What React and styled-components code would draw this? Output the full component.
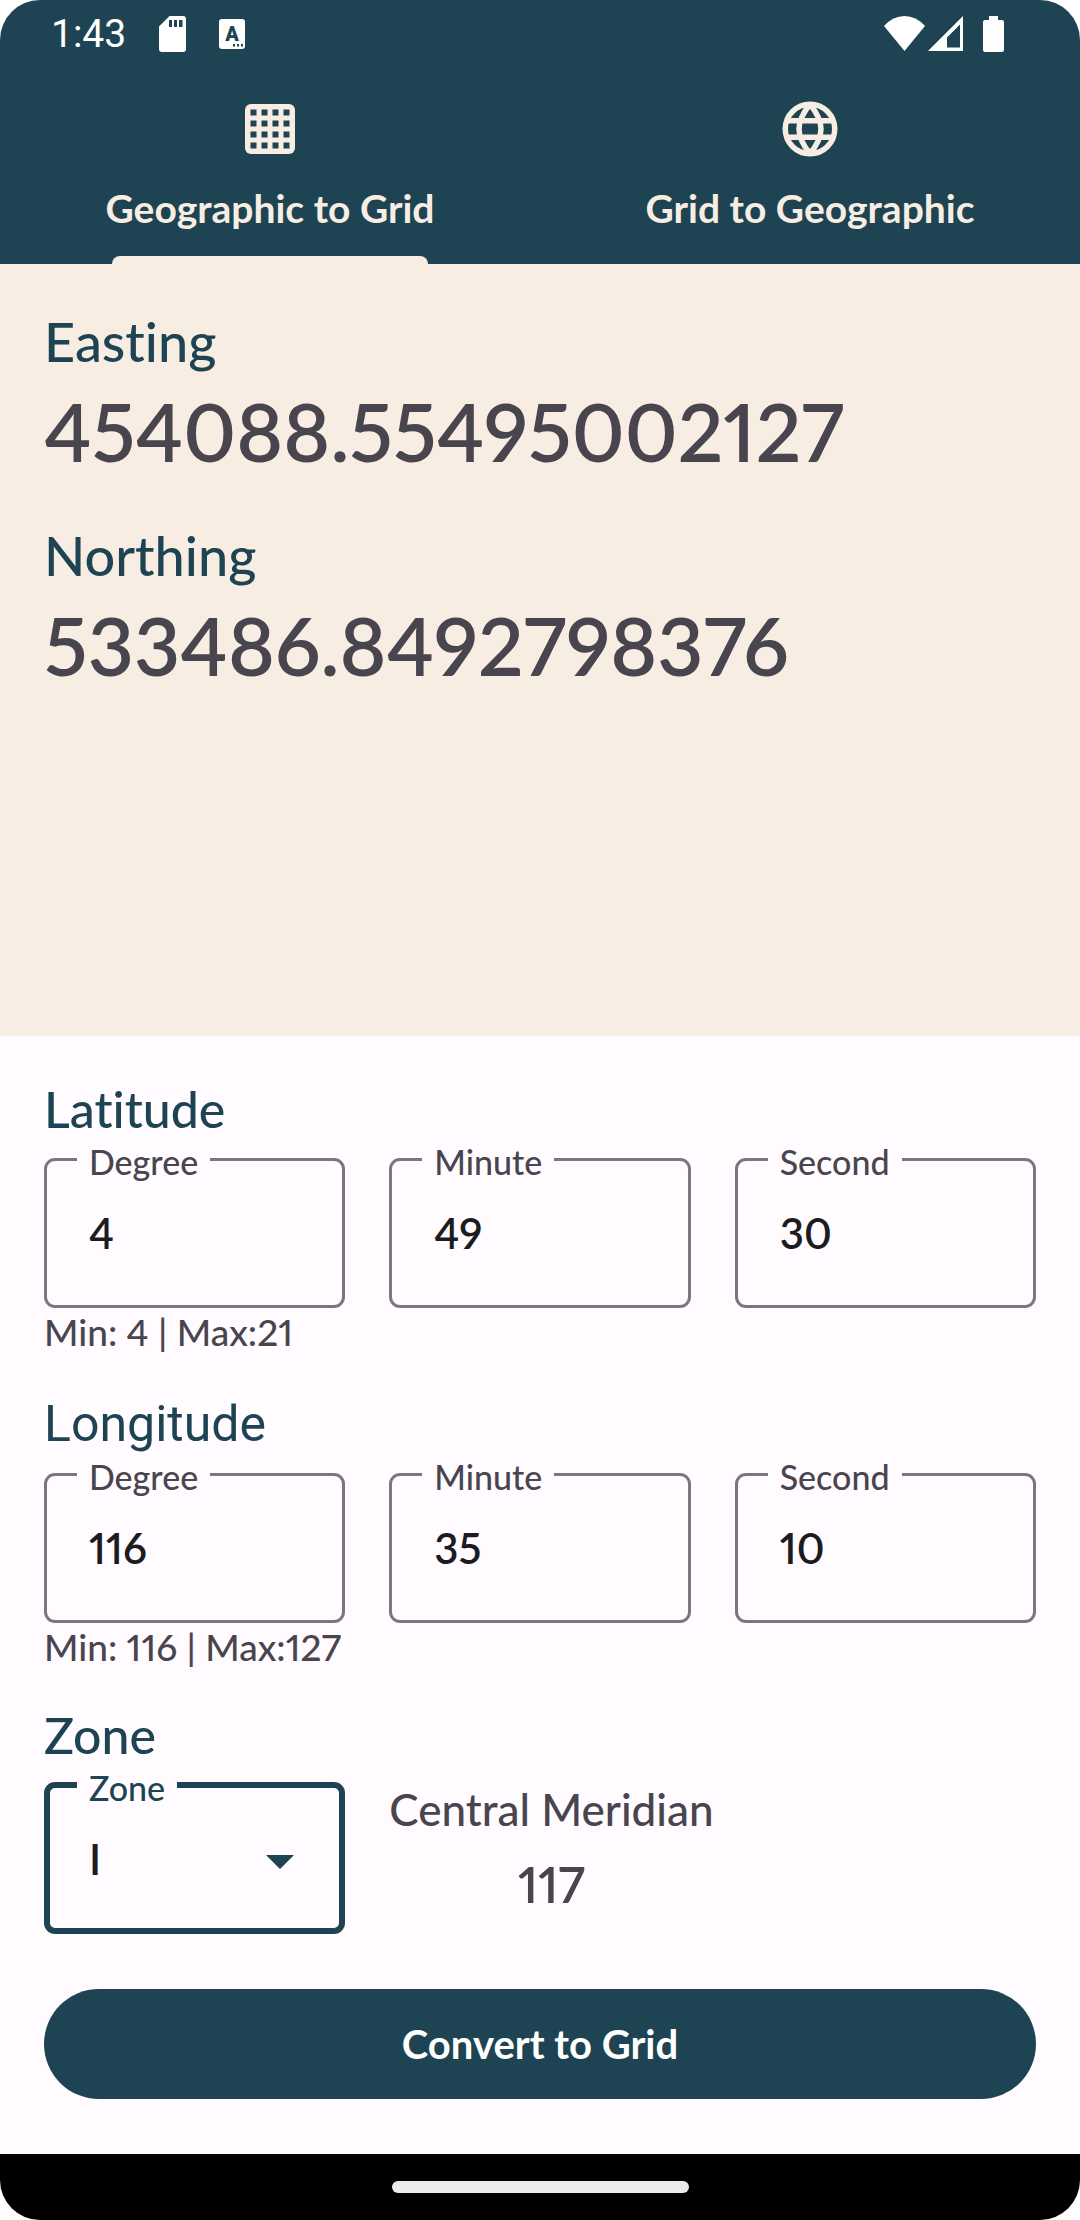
import React, { useState } from "react";
import styled, { createGlobalStyle } from "styled-components";

const teal = "#1e4453";
const cream = "#f7ede2";
const paper = "#fffbff";
const slate = "#49454f";
const outline = "#7a757f";
const brand = `Lato, "Open Sans", sans-serif`;
const system = `Roboto, "Noto Sans", sans-serif`;

const GlobalStyle = createGlobalStyle`
  * { box-sizing: border-box; }
  body {
    margin: 0;
    background: #ffffff;
    color: ${slate};
    font-family: ${brand};
    font-variant-ligatures: none;
    font-variant-numeric: proportional-nums;
  }
  h1, h2, p, dl, dt, dd, fieldset { margin: 0; }
`;

const Screen = styled.div`
  display: flex;
  flex-direction: column;
  min-height: 100vh;
  overflow: hidden;
  border-radius: 40px;
  background: ${paper};
`;

const StatusBar = styled.header`
  display: flex;
  align-items: center;
  justify-content: space-between;
  height: 66px;
  padding: 2px 76px 0 51px;
  background: ${teal};
  color: #ffffff;
`;

const StatusGroup = styled.div`
  display: flex;
  align-items: center;
  gap: ${(p) => p.$gap}px;
`;

const Clock = styled.time`
  font: 400 39px/66px ${system};
`;

const Tabs = styled.div`
  display: grid;
  grid-template-columns: 1fr 1fr;
  background: ${teal};
`;

const Tab = styled.button`
  display: flex;
  flex-direction: column;
  align-items: center;
  height: 198px;
  padding: 30px 0 0;
  border: 0;
  background: none;
  color: ${cream};
  font: 700 39px/48px ${brand};
  cursor: pointer;
`;

const TabLabel = styled.span`
  margin-top: 22px;
`;

const Indicator = styled.span`
  width: 316px;
  height: 8px;
  margin-top: auto;
  border-radius: 8px 8px 0 0;
  background: ${(p) => (p.$active ? cream : "transparent")};
`;

const Results = styled.dl`
  display: flex;
  flex: 1;
  flex-direction: column;
  gap: 36px;
  padding: 44px;
  background: ${cream};
`;

const ResultName = styled.dt`
  color: ${teal};
  font-size: 54px;
  font-weight: 500;
  line-height: 68px;
`;

const ResultValue = styled.dd`
  font-size: 80px;
  font-weight: 600;
  line-height: 110px;
`;

const Form = styled.form`
  display: flex;
  flex-direction: column;
  padding: 43px 44px 55px;
`;

const Group = styled.section`
  margin-bottom: ${(p) => p.$space}px;
`;

const Heading = styled.h2`
  color: ${teal};
  font-family: ${(p) => (p.$system ? system : brand)};
  font-size: 50px;
  font-weight: ${(p) => (p.$system ? 400 : 500)};
  line-height: 61px;
`;

const Columns = styled.div`
  display: grid;
  grid-template-columns: repeat(3, minmax(0, 1fr));
  column-gap: 44px;
`;

const Outline = styled.fieldset`
  position: relative;
  min-width: 0;
  height: 168px;
  padding: 0;
  border: ${(p) => (p.$focused ? `6px solid ${teal}` : `3px solid ${outline}`)};
  border-radius: 11px;
`;

const FieldName = styled.legend`
  margin-left: ${(p) => (p.$focused ? 27 : 30)}px;
  padding: 6px 12px 0;
  color: ${(p) => (p.$focused ? teal : slate)};
  font-size: 34px;
  font-weight: 500;
  line-height: 32px;
`;

const control = `
  display: block;
  width: 100%;
  height: 110px;
  border: 0;
  outline: 0;
  background: none;
  color: #1c1b1f;
  font: 600 42px/56px ${brand};
  font-variant-numeric: proportional-nums;
`;

const NumberInput = styled.input`
  ${control}
  padding: 0 42px;
`;

const ZoneSelect = styled.select`
  ${control}
  padding: 0 39px;
  appearance: none;
`;

const Caret = styled.svg`
  position: absolute;
  right: 45px;
  top: 51px;
  pointer-events: none;
`;

const Hint = styled.p`
  font-size: 37px;
  font-weight: 500;
  line-height: 48px;
`;

const Meridian = styled.div`
  display: flex;
  flex-direction: column;
  align-items: center;
  justify-self: start;
  padding-top: 10px;
  font-weight: 500;
  white-space: nowrap;
`;

const MeridianName = styled.span`
  font-size: 44px;
  line-height: 66px;
`;

const MeridianValue = styled.output`
  font-size: 50px;
  font-weight: 600;
  line-height: 84px;
`;

const Convert = styled.button`
  height: 110px;
  border: 0;
  border-radius: 55px;
  background: ${teal};
  color: #ffffff;
  font: 700 40px/48px ${brand};
  cursor: pointer;
`;

const NavBar = styled.footer`
  display: flex;
  align-items: center;
  justify-content: center;
  height: 66px;
  background: #000000;
`;

const Handle = styled.span`
  width: 297px;
  height: 12px;
  border-radius: 6px;
  background: #ebebeb;
`;

function SdCardIcon() {
  return (
    <svg width="27" height="36" viewBox="0 0 27 36" fill="#fff" aria-hidden="true">
      <path
        fillRule="evenodd"
        d="M10.5 0H24q3 0 3 3v30q0 3-3 3H3q-3 0-3-3V10.500zM10 4v7h3V4zm5 0v7h3V4zm5 0v7h3.500V4z"
      />
    </svg>
  );
}

function KeyboardIcon() {
  return (
    <svg width="26" height="30" viewBox="0 0 26 30" aria-hidden="true">
      <rect width="26" height="30" rx="3" fill="#fff" />
      <text x="13" y="22" textAnchor="middle" fontFamily="Roboto, sans-serif" fontWeight="900" fontSize="20" fill={teal}>
        A
      </text>
      <path d="M14 25h2v2.500h-2zm4 0h2v2.500h-2zm4 0h2v2.500h-2z" fill={teal} />
    </svg>
  );
}

function WifiIcon() {
  return (
    <svg width="41" height="36" viewBox="0 0 41 36" fill="#fff" aria-hidden="true">
      <path d="M0 10Q9 0 20.500 0T41 10L20.500 35z" />
    </svg>
  );
}

function SignalIcon() {
  return (
    <svg width="35" height="36" viewBox="0 0 35 36" fill="#fff" aria-hidden="true">
      <path fillRule="evenodd" d="M35 0v35H0zM32 8.500L19 21.500V31.500h13z" />
    </svg>
  );
}

function BatteryIcon() {
  return (
    <svg width="21" height="36" viewBox="0 0 21 36" fill="#fff" aria-hidden="true">
      <path d="M6 0h9v4h4q2 0 2 2v28q0 2-2 2H2q-2 0-2-2V6q0-2 2-2h4z" />
    </svg>
  );
}

function GridIcon() {
  const steps = [5, 16, 27, 38];
  return (
    <svg width="66" height="66" viewBox="0 0 66 66" aria-hidden="true">
      <rect x="8" y="8" width="50" height="50" rx="6" fill={cream} />
      {steps.map((y) =>
        steps.map((x) => (
          <rect key={`${x}-${y}`} x={x + 8.5} y={y + 8.5} width="6" height="6" fill={teal} />
        ))
      )}
    </svg>
  );
}

function GlobeIcon() {
  return (
    <svg width="66" height="66" viewBox="0 0 24 24" fill="none" stroke={cream} strokeWidth="2" aria-hidden="true">
      <circle cx="12" cy="12" r="9" />
      <path d="M3.500 9h17M3.500 15h17M12 3Q8 8 8 12t4 9M12 3q4 5 4 9t-4 9" />
    </svg>
  );
}

const tabs = [
  { id: "grid", label: "Geographic to Grid", Icon: GridIcon },
  { id: "geo", label: "Grid to Geographic", Icon: GlobeIcon },
];

function AngleGroup({ title, name, values, hint, system: useSystem, space }) {
  return (
    <Group $space={space}>
      <Heading $system={useSystem}>{title}</Heading>
      <Columns>
        {["Degree", "Minute", "Second"].map((unit, i) => {
          const id = `${name}-${unit.toLowerCase()}`;
          return (
            <Outline key={id}>
              <FieldName>
                <label htmlFor={id}>{unit}</label>
              </FieldName>
              <NumberInput id={id} inputMode="decimal" defaultValue={values[i]} />
            </Outline>
          );
        })}
      </Columns>
      <Hint>{hint}</Hint>
    </Group>
  );
}

export default function App() {
  const [active, setActive] = useState("grid");
  return (
    <>
      <GlobalStyle />
      <Screen>
        <StatusBar>
          <StatusGroup $gap={33}>
            <Clock>1:43</Clock>
            <SdCardIcon />
            <KeyboardIcon />
          </StatusGroup>
          <StatusGroup $gap={3}>
            <WifiIcon />
            <StatusGroup $gap={20}>
              <SignalIcon />
              <BatteryIcon />
            </StatusGroup>
          </StatusGroup>
        </StatusBar>

        <Tabs role="tablist">
          {tabs.map(({ id, label, Icon }) => (
            <Tab key={id} type="button" role="tab" aria-selected={active === id} onClick={() => setActive(id)}>
              <Icon />
              <TabLabel>{label}</TabLabel>
              <Indicator $active={active === id} />
            </Tab>
          ))}
        </Tabs>

        <Results>
          <div>
            <ResultName>Easting</ResultName>
            <ResultValue>454088.55495002127</ResultValue>
          </div>
          <div>
            <ResultName>Northing</ResultName>
            <ResultValue>533486.8492798376</ResultValue>
          </div>
        </Results>

        <Form onSubmit={(e) => e.preventDefault()}>
          <AngleGroup title="Latitude" name="lat" values={["4", "49", "30"]} hint="Min: 4 | Max:21" space={38} />
          <AngleGroup title="Longitude" name="lon" values={["116", "35", "10"]} hint="Min: 116 | Max:127" space={34} system />
          <Group $space={55}>
            <Heading>Zone</Heading>
            <Columns>
              <Outline $focused>
                <FieldName $focused>
                  <label htmlFor="zone">Zone</label>
                </FieldName>
                <ZoneSelect id="zone" defaultValue="I">
                  {["I", "II", "III", "IV", "V"].map((z) => (
                    <option key={z}>{z}</option>
                  ))}
                </ZoneSelect>
                <Caret width="28" height="14" viewBox="0 0 28 14" fill={teal} aria-hidden="true">
                  <path d="M0 0h28L14 14z" />
                </Caret>
              </Outline>
              <Meridian>
                <MeridianName>Central Meridian</MeridianName>
                <MeridianValue>117</MeridianValue>
              </Meridian>
            </Columns>
          </Group>
          <Convert type="submit">Convert to Grid</Convert>
        </Form>

        <NavBar>
          <Handle />
        </NavBar>
      </Screen>
    </>
  );
}
